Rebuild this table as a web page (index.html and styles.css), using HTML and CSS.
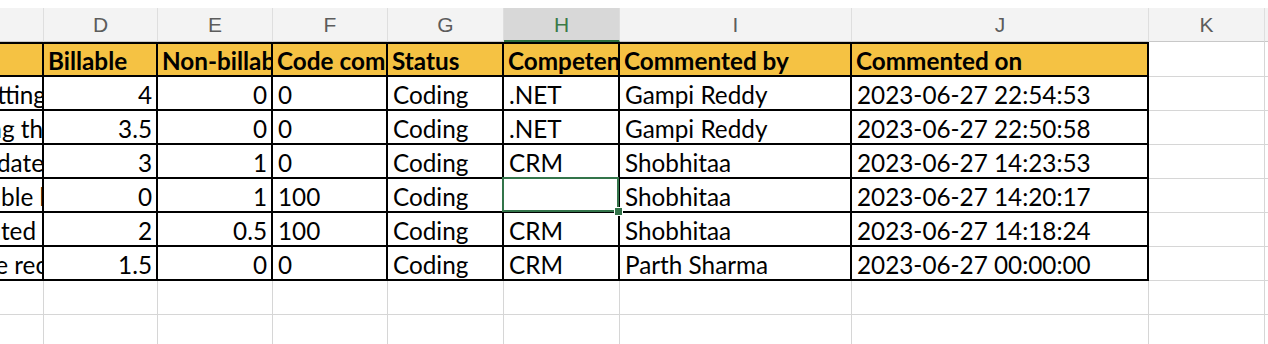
FILE: index.html
```html
<!DOCTYPE html>
<html lang="en">
<head>
<meta charset="utf-8">
<title>Sheet</title>
<link rel="stylesheet" href="styles.css">
</head>
<body>
<div class="sheet">
  <!-- column headers -->
  <div class="ch"></div>
  <div class="ch">D</div>
  <div class="ch">E</div>
  <div class="ch">F</div>
  <div class="ch">G</div>
  <div class="ch sel">H</div>
  <div class="ch">I</div>
  <div class="ch">J</div>
  <div class="ch">K</div>
  <div class="ch last"></div>

  <!-- table header -->
  <div class="t th clip"></div>
  <div class="t th">Billable</div>
  <div class="t th">Non-billable</div>
  <div class="t th">Code completion</div>
  <div class="t th">Status</div>
  <div class="t th">Competency</div>
  <div class="t th">Commented by</div>
  <div class="t th">Commented on</div>
  <div class="g top"></div>
  <div class="g fill top"></div>

  <!-- row -->
  <div class="t clip"><span class="cut c1">Formatting</span></div>
  <div class="t num">4</div>
  <div class="t num">0</div>
  <div class="t">0</div>
  <div class="t">Coding</div>
  <div class="t">.NET</div>
  <div class="t">Gampi Reddy</div>
  <div class="t">2023-06-27 22:54:53</div>
  <div class="g"></div>
  <div class="g fill"></div>

  <div class="t clip"><span class="cut c2">Updating th</span></div>
  <div class="t num">3.5</div>
  <div class="t num">0</div>
  <div class="t">0</div>
  <div class="t">Coding</div>
  <div class="t">.NET</div>
  <div class="t">Gampi Reddy</div>
  <div class="t">2023-06-27 22:50:58</div>
  <div class="g"></div>
  <div class="g fill"></div>

  <div class="t clip"><span class="cut c3">Update</span></div>
  <div class="t num">3</div>
  <div class="t num">1</div>
  <div class="t">0</div>
  <div class="t">Coding</div>
  <div class="t">CRM</div>
  <div class="t">Shobhitaa</div>
  <div class="t">2023-06-27 14:23:53</div>
  <div class="g"></div>
  <div class="g fill"></div>

  <div class="t clip"><span class="cut c4">Non-billable h</span></div>
  <div class="t num">0</div>
  <div class="t num">1</div>
  <div class="t">100</div>
  <div class="t">Coding</div>
  <div class="t active"><span class="handle"></span></div>
  <div class="t">Shobhitaa</div>
  <div class="t">2023-06-27 14:20:17</div>
  <div class="g"></div>
  <div class="g fill"></div>

  <div class="t clip"><span class="cut c5">Estimated</span></div>
  <div class="t num">2</div>
  <div class="t num">0.5</div>
  <div class="t">100</div>
  <div class="t">Coding</div>
  <div class="t">CRM</div>
  <div class="t">Shobhitaa</div>
  <div class="t">2023-06-27 14:18:24</div>
  <div class="g"></div>
  <div class="g fill"></div>

  <div class="t clip"><span class="cut c6">Code rec</span></div>
  <div class="t num">1.5</div>
  <div class="t num">0</div>
  <div class="t">0</div>
  <div class="t">Coding</div>
  <div class="t">CRM</div>
  <div class="t">Parth Sharma</div>
  <div class="t">2023-06-27 00:00:00</div>
  <div class="g"></div>
  <div class="g fill"></div>

  <!-- empty rows -->
  <div class="g"></div><div class="g"></div><div class="g"></div><div class="g"></div><div class="g"></div>
  <div class="g"></div><div class="g"></div><div class="g"></div><div class="g"></div><div class="g fill"></div>
  <div class="g"></div><div class="g"></div><div class="g"></div><div class="g"></div><div class="g"></div>
  <div class="g"></div><div class="g"></div><div class="g"></div><div class="g"></div><div class="g fill"></div>
</div>
</body>
</html>
```

FILE: styles.css
```css
html, body {
  margin: 0;
  padding: 0;
  background: #ffffff;
}

body {
  width: 1268px;
  height: 344px;
  overflow: hidden;
}

.sheet {
  padding-top: 8px;
  display: grid;
  grid-template-columns: 44px 114px 115px 115px 116px 116px 232px 297px 116px 1fr;
  grid-template-rows: 34px 35px 34px 34px 34px 34px 34px 34px 34px 34px;
  font-family: "Lato", "Open Sans", sans-serif;
  font-size: 24.3px;
  color: #000;
}

.sheet > div {
  box-sizing: border-box;
  min-width: 0;
}

/* column header band */
.ch {
  background: #f3f3f3;
  border-right: 1px solid #dedede;
  border-bottom: 1px solid #c8c8c8;
  display: flex;
  align-items: center;
  justify-content: center;
  font-family: "Liberation Sans", Arial, sans-serif;
  font-size: 21px;
  color: #5c5c5c;
  padding-top: 1px;
}

.ch.sel {
  background: #d8d8d8;
  color: #3b7a47;
  border-bottom: 2px solid #2e6e3e;
}

.ch.last {
  border-right: none;
}

/* table cells */
.t {
  border-right: 2px solid #000;
  border-bottom: 2px solid #000;
  display: flex;
  align-items: flex-end;
  padding: 0 4px 2px 5px;
  white-space: nowrap;
  overflow: hidden;
  line-height: 25px;
}

.th {
  background: #f5c243;
  font-weight: 700;
  border-top: 2px solid #000;
  padding-left: 4px;
  padding-right: 0;
}

.num {
  justify-content: flex-end;
}

.clip {
  justify-content: flex-end;
  padding-left: 0;
  padding-right: 0;
}

.cut {
  white-space: pre;
  flex: none;
}

.c1 { margin-right: -4px; }
.c2 { margin-right: -1px; }
.c3 { margin-right: -2px; }
.c4 { margin-right: -11px; }
.c5 { margin-right: 6px; }
.c6 { margin-right: -5px; }

/* plain grid cells */
.g {
  border-right: 1px solid #d6d6d6;
  border-bottom: 1px solid #d6d6d6;
}

.g.fill {
  border-right: none;
}

/* active cell */
.active {
  position: relative;
  overflow: visible;
}

.active::before {
  content: "";
  position: absolute;
  z-index: 1;
  left: -2px;
  top: -2px;
  right: -1px;
  bottom: -1px;
  border: 2px solid #33744a;
}

.handle {
  position: absolute;
  width: 7px;
  height: 7px;
  right: -5px;
  bottom: -5px;
  background: #33744a;
  border: 1px solid #fff;
  z-index: 2;
}
```
